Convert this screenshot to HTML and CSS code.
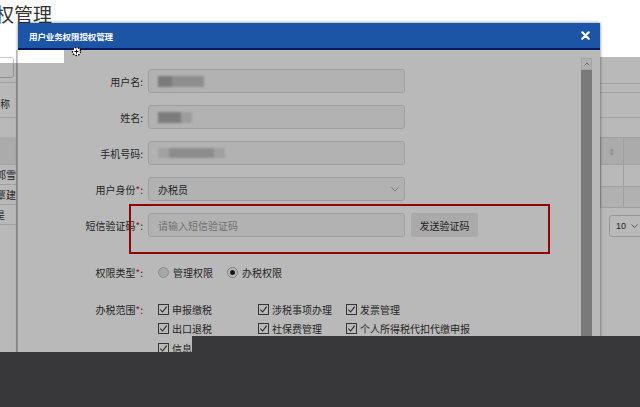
FILE: index.html
```html
<!DOCTYPE html>
<html lang="zh-CN">
<head>
<meta charset="utf-8">
<title>授权管理</title>
<link rel="stylesheet" href="styles.css">
</head>
<body>
<div class="page">
  <h1 class="page-title">授权管理</h1>
  <div class="bg-cols">
    <div class="bg-left">
      <div class="bl-search"></div>
      <div class="bl-row1"><span class="bl-txt">称</span></div>
      <div class="bl-head"></div>
      <div class="bl-row"><span class="bl-txt bl-shift">郭雪</span></div>
      <div class="bl-row"><span class="bl-txt bl-shift">覃建</span></div>
      <div class="bl-row"><span class="bl-txt bl-shift2">是</span></div>
    </div>
    <div class="bg-mid"></div>
    <div class="bg-right">
      <div class="br-tabs"></div>
      <div class="br-bar"></div>
      <div class="br-head"><div class="br-c1"><span class="sort">⇕</span></div><div class="br-c2"></div></div>
      <div class="br-row"><div class="br-c1"></div><div class="br-c2"></div></div>
      <div class="br-row br-alt"><div class="br-c1"></div><div class="br-c2"></div></div>
      <div class="br-pager"><span class="pg-num">10</span><svg width="7" height="4" viewBox="0 0 7 4"><path d="M0.5 0.5 L3.5 3.5 L6.5 0.5" fill="none" stroke="#666" stroke-width="0.9"/></svg></div>
    </div>
  </div>
</div>

<div class="modal">
  <div class="modal-head">
    <span class="modal-title">用户业务权限授权管理</span>
    <svg class="modal-close" width="9" height="9" viewBox="0 0 9 9"><path d="M1.3 1.3 L7.7 7.7 M7.7 1.3 L1.3 7.7" stroke="#fff" stroke-width="2.2" stroke-linecap="round"/></svg>
  </div>
  <div class="modal-body">
    <div class="form">
      <div class="field">
        <label class="label">用户名:</label>
        <div class="input"><span class="blur blur-user"></span></div>
      </div>
      <div class="field">
        <label class="label">姓名:</label>
        <div class="input"><span class="blur blur-name"></span></div>
      </div>
      <div class="field">
        <label class="label">手机号码:</label>
        <div class="input"><span class="blur blur-phone"></span></div>
      </div>
      <div class="field">
        <label class="label">用户身份<span class="req">*</span>:</label>
        <div class="input select"><span>办税员</span><svg width="8" height="5" viewBox="0 0 8 5"><path d="M0.5 0.5 L4 4 L7.5 0.5" fill="none" stroke="#9a9a9a" stroke-width="0.9"/></svg></div>
      </div>
      <div class="field">
        <label class="label">短信验证码<span class="req">*</span>:</label>
        <div class="input placeholder">请输入短信验证码</div>
        <button class="btn">发送验证码</button>
      </div>
      <div class="field field-radio">
        <label class="label">权限类型<span class="req">*</span>:</label>
        <div class="radios">
          <span class="radio"><span class="rc"></span>管理权限</span>
          <span class="radio"><span class="rc on"></span>办税权限</span>
        </div>
      </div>
      <div class="field field-scope">
        <label class="label">办税范围<span class="req">*</span>:</label>
        <div class="checks">
          <span class="cb"><svg width="11" height="11" viewBox="0 0 11 11"><rect x="0.5" y="0.5" width="10" height="10" fill="#fff" stroke="#4a4a4a"/><path d="M2.4 5.6 L4.6 8 L8.7 2.6" fill="none" stroke="#3a3a3a" stroke-width="1.1"/></svg>申报缴税</span>
          <span class="cb"><svg width="11" height="11" viewBox="0 0 11 11"><rect x="0.5" y="0.5" width="10" height="10" fill="#fff" stroke="#4a4a4a"/><path d="M2.4 5.6 L4.6 8 L8.7 2.6" fill="none" stroke="#3a3a3a" stroke-width="1.1"/></svg>涉税事项办理</span>
          <span class="cb"><svg width="11" height="11" viewBox="0 0 11 11"><rect x="0.5" y="0.5" width="10" height="10" fill="#fff" stroke="#4a4a4a"/><path d="M2.4 5.6 L4.6 8 L8.7 2.6" fill="none" stroke="#3a3a3a" stroke-width="1.1"/></svg>发票管理</span>
          <span class="cb"><svg width="11" height="11" viewBox="0 0 11 11"><rect x="0.5" y="0.5" width="10" height="10" fill="#fff" stroke="#4a4a4a"/><path d="M2.4 5.6 L4.6 8 L8.7 2.6" fill="none" stroke="#3a3a3a" stroke-width="1.1"/></svg>出口退税</span>
          <span class="cb"><svg width="11" height="11" viewBox="0 0 11 11"><rect x="0.5" y="0.5" width="10" height="10" fill="#fff" stroke="#4a4a4a"/><path d="M2.4 5.6 L4.6 8 L8.7 2.6" fill="none" stroke="#3a3a3a" stroke-width="1.1"/></svg>社保费管理</span>
          <span class="cb"><svg width="11" height="11" viewBox="0 0 11 11"><rect x="0.5" y="0.5" width="10" height="10" fill="#fff" stroke="#4a4a4a"/><path d="M2.4 5.6 L4.6 8 L8.7 2.6" fill="none" stroke="#3a3a3a" stroke-width="1.1"/></svg>个人所得税代扣代缴申报</span>
          <span class="cb"><svg width="11" height="11" viewBox="0 0 11 11"><rect x="0.5" y="0.5" width="10" height="10" fill="#fff" stroke="#4a4a4a"/><path d="M2.4 5.6 L4.6 8 L8.7 2.6" fill="none" stroke="#3a3a3a" stroke-width="1.1"/></svg>信息报告</span>
        </div>
      </div>
    </div>
    <div class="scrollbar">
      <div class="sb-up"><svg width="6" height="4" viewBox="0 0 6 4"><path d="M0.5 3.5 L3 1 L5.5 3.5" fill="none" stroke="#888" stroke-width="0.9"/></svg></div>
      <div class="sb-thumb"></div>
    </div>
  </div>
  <div class="mark-box"></div>
</div>

<div class="dim dim-main"></div>
<div class="dim dim-modal"></div>
<div class="dim dim-right"></div>

<svg class="cursor" width="11" height="11" viewBox="0 0 11 11"><circle cx="5.5" cy="5.5" r="4" fill="#fff" stroke="#000" stroke-width="1.4" stroke-dasharray="1.6 1.2"/><path d="M3.5 5.5 H7.5 M5.5 3.5 V7.5" stroke="#000" stroke-width="1"/></svg>

<div class="blackout blackout-a"></div>
<div class="blackout blackout-b"></div>
</body>
</html>
```

FILE: styles.css
```css
* { box-sizing: border-box; margin: 0; padding: 0; }
html, body { width: 640px; height: 407px; overflow: hidden; }
body {
  background: #fff;
  font-family: "Noto Sans CJK SC", "Microsoft YaHei", sans-serif;
  color: #333;
  position: relative;
}

/* background page */
.page { height: 407px; overflow: hidden; }
.page-title {
  font-size: 19px;
  font-weight: normal;
  line-height: 28px;
  height: 50px;
  margin-left: -24px;
  color: #333;
  white-space: nowrap;
}
.bg-cols { display: flex; height: 357px; }
.bg-left { width: 17px; overflow: hidden; border-right: 1px solid #ccc; font-size: 10px; }
.bg-mid { flex: 1; }
.bg-right { width: 40px; overflow: hidden; }

.bl-search {
  margin-top: 7px;
  margin-left: -100px;
  width: 114px;
  height: 21px;
  border: 1px solid #c8c8c8;
  border-radius: 3px;
}
.bl-row1 {
  margin-top: 4px;
  height: 36px;
  border-top: 1px solid #ddd;
  border-bottom: 1px solid #ddd;
  padding-top: 15px;
  line-height: 12px;
}
.bl-head { margin-top: 19px; height: 28px; background: #ececec; border-bottom: 1px solid #ddd; }
.bl-row { height: 20px; border-bottom: 1px solid #ddd; line-height: 19px; white-space: nowrap; }
.bl-txt { display: inline-block; color: #333; }
.bl-shift { margin-left: -4px; }
.bl-shift2 { margin-left: -5px; }

.br-tabs { margin-top: 33px; height: 10px; border-top: 1px solid #ddd; border-bottom: 1px solid #ddd; }
.br-bar { height: 25px; border-bottom: 1px solid #ddd; }
.br-head, .br-row { display: flex; border-bottom: 1px solid #ddd; border-left: 1px solid #ddd; }
.br-head { margin-top: 19px; height: 28px; background: #ececec; border-top: 1px solid #ddd; }
.br-row { height: 22px; }
.br-alt { height: 21px; background: #f4f4f4; }
.br-c1 { width: 23px; border-right: 1px solid #ddd; display: flex; align-items: center; justify-content: center; }
.br-c2 { flex: 1; }
.sort { font-size: 9px; color: #bbb; }
.br-pager {
  margin-top: 7px;
  margin-left: 9px;
  width: 40px;
  height: 22px;
  border: 1px solid #d0d0d0;
  border-radius: 3px;
  display: flex;
  align-items: center;
  gap: 5px;
  padding-left: 6px;
  font-family: "Liberation Sans", Arial, sans-serif;
  font-size: 9px;
  color: #333;
}

/* modal */
.modal {
  position: absolute;
  left: 18px;
  top: 23px;
  width: 582px;
  height: 400px;
  background: #fff;
  box-shadow: 0 0 3px rgba(0, 0, 0, .55);
}
.modal-head {
  height: 27px;
  background: #1d55a6;
  border-bottom: 2px solid #07195a;
  display: flex;
  align-items: center;
  justify-content: space-between;
  padding: 0 10px 0 11px;
  color: #fff;
}
.modal-title { font-size: 8.5px; font-weight: bold; letter-spacing: -0.1px; }
.modal-close { display: block; }
.modal-body { display: flex; padding: 8px 8px 0 0; height: 373px; }
.form { flex: 1; padding-top: 11px; }

.field { display: flex; align-items: center; height: 24px; margin-bottom: 12px; }
.label {
  width: 130px;
  flex: none;
  padding-right: 5px;
  text-align: right;
  font-size: 10px;
  color: #333;
  white-space: nowrap;
}
.req { color: #e8141d; }
.input {
  width: 257px;
  height: 24px;
  border: 1px solid #dadada;
  border-radius: 3px;
  background: #f6f6f6;
  display: flex;
  align-items: center;
  padding-left: 9px;
  font-size: 10px;
  color: #333;
}
.select { justify-content: space-between; padding-right: 5px; }
.placeholder { color: #9c9c9c; }
.btn {
  margin-left: 6px;
  height: 24px;
  width: 67px;
  border: none;
  border-radius: 2px;
  background: #ebebeb;
  font-family: inherit;
  font-size: 10px;
  color: #333;
}
.blur { display: block; height: 11px; filter: blur(1px); }
.blur-user { width: 46px; background: linear-gradient(90deg, #a9a9a9 0 30%, #c4c4c4 30% 100%); }
.blur-name { width: 34px; background: linear-gradient(90deg, #ababab 0 68%, #d8d8d8 68% 100%); }
.blur-phone { width: 67px; background: linear-gradient(90deg, #e0e0e0 0 16%, #c2c2c2 16% 84%, #dedede 84% 100%); height: 10px; }

.field-radio { height: 16px; margin-top: 27px; margin-bottom: 0; }
.radios { display: flex; align-items: center; padding-left: 10px; font-size: 10px; }
.radio { display: flex; align-items: center; gap: 4px; margin-right: 14px; color: #333; }
.rc {
  width: 11px;
  height: 11px;
  border-radius: 50%;
  border: 1px solid #c4c4c4;
  background: #e6e6e6;
  display: flex;
  align-items: center;
  justify-content: center;
}
.rc.on { background: #fff; border-color: #aaa; }
.rc.on::after { content: ""; width: 5px; height: 5px; border-radius: 50%; background: #222; }

.field-scope { height: auto; align-items: flex-start; margin-top: 19.5px; }
.field-scope .label { line-height: 19.5px; }
.checks {
  display: grid;
  grid-template-columns: 100px 88px auto;
  grid-auto-rows: 19.5px;
  padding-left: 10px;
  font-size: 10px;
}
.cb { display: flex; align-items: center; gap: 3px; color: #333; white-space: nowrap; }
.cb svg { flex: none; }

.scrollbar { width: 11px; display: flex; flex-direction: column; }
.sb-up {
  height: 12px;
  background: #f4f4f4;
  border: 1px solid #e2e2e2;
  display: flex;
  align-items: center;
  justify-content: center;
}
.sb-thumb { flex: 1; background: #a9a9a9; }

.mark-box {
  position: absolute;
  left: 111px;
  top: 181px;
  width: 421px;
  height: 50px;
  border: 2px solid #c80808;
}

/* screen dimming layer */
.dim { position: absolute; background: rgba(0, 0, 0, .275); }
.dim-main { left: 0; right: 0; top: 63px; bottom: 0; }
.dim-modal { left: 64px; width: 536px; top: 50px; height: 13px; }
.dim-right { left: 600px; right: 0; top: 57px; height: 6px; }

.cursor { position: absolute; left: 71px; top: 46px; }

.blackout { position: absolute; background: #38383a; }
.blackout-a { left: 192px; right: 0; top: 336px; height: 16px; }
.blackout-b { left: 0; right: 0; top: 352px; bottom: 0; }
```
